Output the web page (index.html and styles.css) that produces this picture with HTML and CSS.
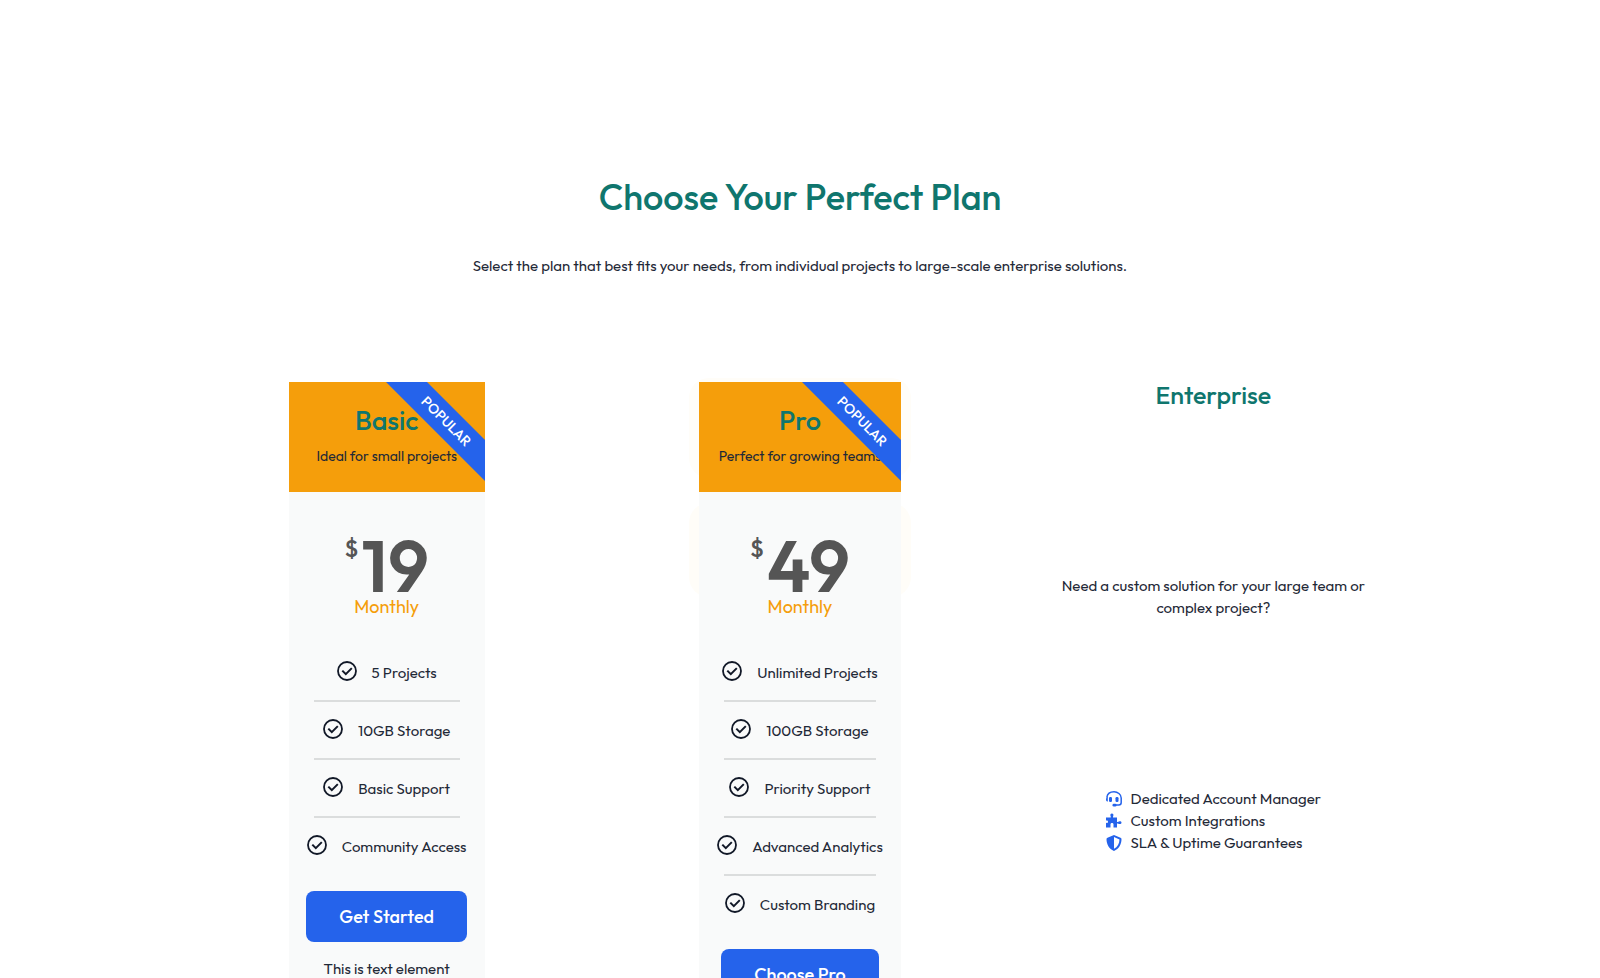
FILE: index.html
```html
<!DOCTYPE html>
<html lang="en">
<head>
  <meta charset="UTF-8" />
  <meta name="viewport" content="width=device-width, initial-scale=1.0" />
  <title>Choose Your Perfect Plan</title>
  <link rel="stylesheet" href="styles.css">
</head>
<body>
  <svg class="sprite" aria-hidden="true">
    <symbol id="check" viewBox="0 0 20 20">
      <circle cx="10" cy="10" r="9" fill="none" stroke="currentColor" stroke-width="1.8" />
      <path d="M5.300 9.600l3.500 3.500 6-6" fill="none" stroke="currentColor" stroke-width="2" />
    </symbol>
  </svg>

  <main class="container">
    <h1>Choose Your Perfect Plan</h1>
    <p class="intro">Select the plan that best fits your needs, from individual projects to large-scale enterprise solutions.</p>

    <div class="plans">
      <section class="plan">
        <div class="plan-header">
          <h2>Basic</h2>
          <p>Ideal for small projects</p>
          <span class="ribbon">POPULAR</span>
        </div>
        <div class="price"><sup>$</sup><span>19</span></div>
        <p class="period">Monthly</p>
        <ul class="features">
          <li><svg><use href="#check" /></svg>5 Projects</li>
          <li><svg><use href="#check" /></svg>10GB Storage</li>
          <li><svg><use href="#check" /></svg>Basic Support</li>
          <li><svg><use href="#check" /></svg>Community Access</li>
        </ul>
        <button type="button">Get Started</button>
        <p class="note">This is text element</p>
      </section>

      <div class="highlight">
        <section class="plan plan-pro">
          <div class="plan-header">
            <h2>Pro</h2>
            <p>Perfect for growing teams</p>
            <span class="ribbon">POPULAR</span>
          </div>
          <div class="price"><sup>$</sup><span>49</span></div>
          <p class="period">Monthly</p>
          <ul class="features">
            <li><svg><use href="#check" /></svg>Unlimited Projects</li>
            <li><svg><use href="#check" /></svg>100GB Storage</li>
            <li><svg><use href="#check" /></svg>Priority Support</li>
            <li><svg><use href="#check" /></svg>Advanced Analytics</li>
            <li><svg><use href="#check" /></svg>Custom Branding</li>
          </ul>
          <button type="button">Choose Pro</button>
        </section>
      </div>

      <section class="enterprise">
        <h2>Enterprise</h2>
        <p>Need a custom solution for your large team or complex project?</p>
        <ul>
          <li>
            <svg viewBox="0 0 16 16"><path d="M.8 6.500C1.400 2.800 4.400.8 8 .8s7.200 2.500 7.200 6.200v4.500a2.500 2.500 0 0 1-2.500 2.500H9" fill="none" stroke="currentColor" stroke-width="1.500" /><rect x="3" y="6" width="3" height="5" rx="1.200" /><rect x="9.500" y="6" width="3" height="5" rx="1.200" /><path d="M0 8.500C0 6.500 1 6 1.800 6v4.500C.8 10.500 0 10 0 8.500z" /><rect x="6.500" y="12.800" width="4" height="2.700" rx="1.300" /></svg>
            Dedicated Account Manager
          </li>
          <li>
            <svg viewBox="0 0 16 16"><path d="M0 4.500h4.200c.6 0 .8-.5.500-1C3.900 1.800 4.600.5 5.900.5s2 1.300 1.200 3c-.3.500-.1 1 .5 1H11v4c0 .5.400.6.900.4 1.700-1 3.600-.5 3.600.8s-1.900 1.800-3.600.8c-.5-.2-.9-.1-.9.400V14.500H7.500v-3c0-1-.6-1.500-1.500-1.500s-1.500.5-1.500 1.500v3H0V9.800c1.200.4 2-.2 2-1.100S1.200 7.200 0 7.600z" /></svg>
            Custom Integrations
          </li>
          <li>
            <svg viewBox="0 0 16 16"><path fill-rule="evenodd" d="M8 0l6.500 2.700c.6.200 1 .8 1 1.400C15.500 9.500 13 14 8 16 3 14 .5 9.500.5 4.100c0-.6.400-1.200 1-1.400zM8 2v11.800c3.500-1.800 5.400-5.200 5.500-9.400z" /></svg>
            SLA &amp; Uptime Guarantees
          </li>
        </ul>
      </section>
    </div>
  </main>
</body>
</html>
```
FILE: styles.css
```css
* {
  box-sizing: border-box;
}
body {
  font-family: Outfit, Lato, sans-serif;
  font-size: 15px;
  line-height: 22px;
  color: #1f2937;
  background: #fff;
  margin: 0;
}
h1, h2, p, ul {
  margin: 0;
  padding: 0;
}
ul {
  list-style: none;
}
.sprite {
  position: absolute;
  width: 0;
  height: 0;
}
.container {
  max-width: 1240px;
  margin: auto;
  padding-top: 172px;
  text-align: center;
}
h1, h2 {
  color: #0f766e;
  font-weight: 500;
}
h1 {
  font-size: 36px;
  line-height: 50px;
}
.intro {
  margin-top: 33px;
}
.plans {
  display: grid;
  grid-template-columns: repeat(3, 1fr);
  justify-items: center;
  align-items: start;
  margin-top: 105px;
}
.plan {
  position: relative;
  width: 196px;
  background: #f9fafa;
  padding-bottom: 24px;
}
.plan-pro {
  width: 202px;
}
.plan-header {
  position: relative;
  overflow: hidden;
  height: 110px;
  padding-top: 24px;
  background: #f59e0b;
}
h2 {
  font-size: 27px;
  line-height: 28px;
}
.plan-header p {
  margin-top: 11px;
  font-size: 14px;
}
.ribbon {
  position: absolute;
  top: 25px;
  right: -41px;
  width: 160px;
  background: #2563eb;
  color: #fff;
  font-size: 14px;
  font-weight: 500;
  line-height: 29px;
  transform: rotate(45deg);
}
.highlight {
  position: relative;
}
.highlight::before, .highlight::after {
  content: "";
  position: absolute;
  left: -10px;
  right: -10px;
  top: -4px;
  height: 100px;
  border-radius: 20px;
  background: #fffdf8;
}
.highlight::after {
  top: 121px;
  height: 94px;
}
.highlight .plan {
  z-index: 1;
}
.price {
  display: flex;
  justify-content: center;
  gap: 3px;
  margin-top: 42px;
  color: #555;
  font-size: 72px;
  font-weight: 600;
  line-height: 64px;
}
.price sup {
  font-size: 24px;
  font-weight: 500;
  line-height: 28px;
}
.period {
  color: #f59e0b;
  font-size: 18px;
  line-height: 18px;
}
.features {
  margin-top: 28px;
}
.features li {
  position: relative;
  display: flex;
  align-items: center;
  justify-content: center;
  gap: 15px;
  height: 58px;
  white-space: nowrap;
}
.features li + li::before {
  content: "";
  position: absolute;
  top: -2px;
  left: 25px;
  right: 25px;
  height: 2px;
  background: #dbdddd;
}
.features svg {
  width: 20px;
  height: 20px;
  margin-bottom: 4px;
  color: #111827;
}
button {
  height: 51px;
  margin-top: 15px;
  padding: 0 33px;
  border: none;
  border-radius: 8px;
  background: #2563eb;
  color: #fff;
  font-family: inherit;
  font-size: 18px;
  font-weight: 500;
  cursor: pointer;
}
.note {
  margin-top: 16px;
}
.enterprise h2 {
  font-size: 25px;
  line-height: 26px;
}
.enterprise p {
  max-width: 310px;
  margin-top: 167px;
}
.enterprise ul {
  width: fit-content;
  margin: 169px auto 0;
  text-align: left;
}
.enterprise li {
  display: flex;
  align-items: center;
  gap: 9px;
}
.enterprise svg {
  width: 16px;
  height: 16px;
  color: #2563eb;
  fill: currentColor;
}
```
